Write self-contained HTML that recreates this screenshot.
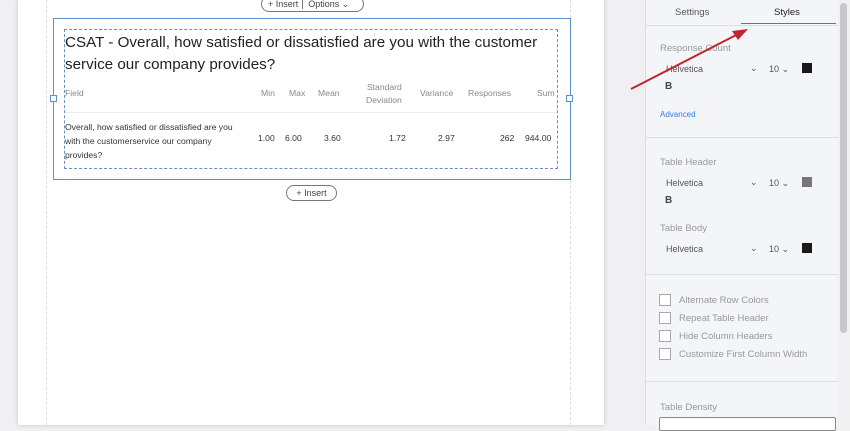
<!DOCTYPE html>
<html><head><style>
body{margin:0;width:850px;height:425px;overflow:hidden;background:#f0f0f2;font-family:"Liberation Sans",sans-serif;position:relative}
.a{position:absolute}
.page{left:18px;top:0;width:586px;height:425px;background:#fff;box-shadow:0 0 5px rgba(0,0,0,.18)}
.vd{top:0;height:425px;border-left:1px dashed #ddd}
.pill{border:1px solid #777;border-radius:10px;font-size:9px;color:#444;height:14px;line-height:14px;background:#fff}
.sel{left:53px;top:18px;width:516px;height:160px;border:1px solid #5b8fd8}
.dash{left:64px;top:29px;width:492px;height:138px;border:1px dashed #6a8fc0}
.h{font-size:8.6px;color:#888}
.b{font-size:8.6px;color:#333}
.panel{left:645px;top:0;width:193px;height:425px;background:#f4f5f9;border-left:1px solid #ddd}
.lbl{font-size:9.5px;color:#999}
.f{font-size:9px;color:#555}
.sw{width:10px;height:10px}
.hr{left:645px;width:193px;border-top:1px solid #dcdde2}
.cb{width:10px;height:10px;border:1px solid #aaa;background:#fff}
.ct{font-size:9.5px;color:#999}
</style></head><body>
<div class="a page"></div>
<div class="a vd" style="left:46px"></div>
<div class="a vd" style="left:570px"></div>
<div class="a pill" style="left:261px;top:-4px;width:101px"><span style="padding-left:6px">+ Insert</span><span style="border-left:1px solid #777;margin-left:4px;padding-left:5px">Options ⌄</span></div>
<div class="a sel"></div>
<div class="a" style="left:50px;top:95px;width:5px;height:5px;border:1px solid #5b8fd8;background:#fff"></div>
<div class="a" style="left:566px;top:95px;width:5px;height:5px;border:1px solid #5b8fd8;background:#fff"></div>
<div class="a dash"></div>
<div class="a" style="left:65px;top:32px;font-size:15.2px;line-height:22px;color:#222;width:492px">CSAT - Overall, how satisfied or dissatisfied are you with the customer service our company provides?</div>
<div class="a h" style="left:65px;top:88px">Field</div>
<div class="a h" style="left:261px;top:88px">Min</div>
<div class="a h" style="left:289px;top:88px">Max</div>
<div class="a h" style="left:318px;top:88px">Mean</div>
<div class="a h" style="left:366px;top:81px;text-align:right;line-height:13px">Standard<br>Deviation</div>
<div class="a h" style="left:420px;top:88px">Variance</div>
<div class="a h" style="left:468px;top:88px">Responses</div>
<div class="a h" style="left:537px;top:88px">Sum</div>
<div class="a" style="left:65px;top:112px;width:492px;border-top:1px solid #eee"></div>
<div class="a b" style="left:65px;top:120px;line-height:14px;width:184px">Overall, how satisfied or dissatisfied are you with the customerservice our company provides?</div>
<div class="a b" style="left:258px;top:133px">1.00</div>
<div class="a b" style="left:285px;top:133px">6.00</div>
<div class="a b" style="left:324px;top:133px">3.60</div>
<div class="a b" style="left:389px;top:133px">1.72</div>
<div class="a b" style="left:438px;top:133px">2.97</div>
<div class="a b" style="left:500px;top:133px">262</div>
<div class="a b" style="left:525px;top:133px">944.00</div>
<div class="a pill" style="left:286px;top:185px;width:49px;text-align:center">+ Insert</div>

<div class="a panel"></div>
<div class="a" style="left:838px;top:0;width:12px;height:425px;background:#f0f0f0"></div>
<div class="a" style="left:840px;top:3px;width:7px;height:330px;background:#c8c8c8;border-radius:4px"></div>
<div class="a" style="left:675px;top:7px;font-size:9.5px;color:#555">Settings</div>
<div class="a" style="left:774px;top:7px;font-size:9.5px;color:#222">Styles</div>
<div class="a hr" style="top:25px"></div>
<div class="a" style="left:741px;top:23px;width:95px;border-top:1px solid #3a7bd5"></div>
<div class="a lbl" style="left:660px;top:43px">Response Count</div>
<div class="a f" style="left:666px;top:64px">Helvetica</div><div class="a f" style="left:750px;top:63px">⌄</div><div class="a f" style="left:769px;top:64px">10 ⌄</div><div class="a sw" style="left:802px;top:63px;background:#1a1a1a"></div>
<div class="a" style="left:665px;top:81px;font-size:10px;font-weight:bold;color:#444">B</div>
<div class="a" style="left:660px;top:110px;font-size:8px;color:#3a7bd5">Advanced</div>
<div class="a hr" style="top:137px"></div>
<div class="a lbl" style="left:660px;top:157px">Table Header</div>
<div class="a f" style="left:666px;top:178px">Helvetica</div><div class="a f" style="left:750px;top:177px">⌄</div><div class="a f" style="left:769px;top:178px">10 ⌄</div><div class="a sw" style="left:802px;top:177px;background:#777"></div>
<div class="a" style="left:665px;top:195px;font-size:10px;font-weight:bold;color:#444">B</div>
<div class="a lbl" style="left:660px;top:223px">Table Body</div>
<div class="a f" style="left:666px;top:244px">Helvetica</div><div class="a f" style="left:750px;top:243px">⌄</div><div class="a f" style="left:769px;top:244px">10 ⌄</div><div class="a sw" style="left:802px;top:243px;background:#1a1a1a"></div>
<div class="a hr" style="top:274px"></div>
<div class="a cb" style="left:659px;top:294px"></div><div class="a ct" style="left:679px;top:295px">Alternate Row Colors</div>
<div class="a cb" style="left:659px;top:312px"></div><div class="a ct" style="left:679px;top:313px">Repeat Table Header</div>
<div class="a cb" style="left:659px;top:330px"></div><div class="a ct" style="left:679px;top:331px">Hide Column Headers</div>
<div class="a cb" style="left:659px;top:348px"></div><div class="a ct" style="left:679px;top:349px">Customize First Column Width</div>
<div class="a hr" style="top:381px"></div>
<div class="a lbl" style="left:660px;top:402px">Table Density</div>
<div class="a" style="left:659px;top:417px;width:175px;height:12px;border:1px solid #888;border-radius:2px;background:#fff"></div>
<svg class="a" style="left:0;top:0" width="850" height="425"><line x1="631" y1="89" x2="740" y2="33" stroke="#c0262e" stroke-width="2"/><polygon points="748,29 732,31 738,40" fill="#c0262e"/></svg>
</body></html>
